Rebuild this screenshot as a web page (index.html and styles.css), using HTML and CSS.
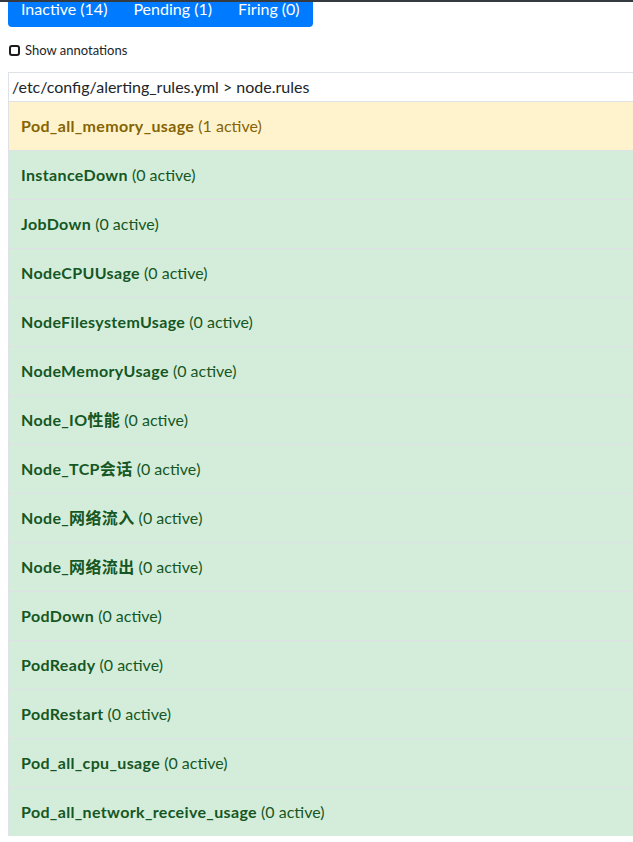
FILE: index.html
```html
<!DOCTYPE html>
<html lang="en">
<head>
    <meta charset="UTF-8">
    <meta name="viewport" content="width=device-width, initial-scale=1.0">
    <title>Alerts</title>
    <link rel="stylesheet" href="styles.css">
</head>
<body>
    <!-- bottom edge of the fixed navbar -->
    <div class="navbar-edge"></div>

    <div class="btn-group">
        <button class="btn">Inactive (14)</button>
        <button class="btn">Pending (1)</button>
        <button class="btn">Firing (0)</button>
    </div>

    <label class="show-annotations">
        <input type="checkbox" class="check">
        <span>Show annotations</span>
    </label>

    <table class="rules">
        <tr class="group-row">
            <td>/etc/config/alerting_rules.yml &gt; node.rules</td>
        </tr>
        <tr class="rule pending"><td><b>Pod_all_memory_usage</b> (1 active)</td></tr>
        <tr class="rule inactive"><td><b>InstanceDown</b> (0 active)</td></tr>
        <tr class="rule inactive"><td><b>JobDown</b> (0 active)</td></tr>
        <tr class="rule inactive"><td><b>NodeCPUUsage</b> (0 active)</td></tr>
        <tr class="rule inactive"><td><b>NodeFilesystemUsage</b> (0 active)</td></tr>
        <tr class="rule inactive"><td><b>NodeMemoryUsage</b> (0 active)</td></tr>
        <tr class="rule inactive"><td><b>Node_IO性能</b> (0 active)</td></tr>
        <tr class="rule inactive"><td><b>Node_TCP会话</b> (0 active)</td></tr>
        <tr class="rule inactive"><td><b>Node_网络流入</b> (0 active)</td></tr>
        <tr class="rule inactive"><td><b>Node_网络流出</b> (0 active)</td></tr>
        <tr class="rule inactive"><td><b>PodDown</b> (0 active)</td></tr>
        <tr class="rule inactive"><td><b>PodReady</b> (0 active)</td></tr>
        <tr class="rule inactive"><td><b>PodRestart</b> (0 active)</td></tr>
        <tr class="rule inactive"><td><b>Pod_all_cpu_usage</b> (0 active)</td></tr>
        <tr class="rule inactive"><td><b>Pod_all_network_receive_usage</b> (0 active)</td></tr>
    </table>
</body>
</html>
```
FILE: styles.css
```css
html {
    overflow: hidden;
}
body {
    font-family: Lato, "Noto Sans CJK SC", sans-serif;
    font-size: 16px;
    line-height: 24px;
    color: #212529;
    background-color: #fff;
    margin: 0 0 0 8px;
    padding-top: 1px;
}
.navbar-edge {
    position: fixed;
    top: 0;
    left: 0;
    right: 0;
    height: 2px;
    background-color: #343a40;
    z-index: 1;
}
.btn-group {
    display: flex;
    width: max-content;
    margin-top: -10px;
    background-color: #007bff;
    border-radius: 4px;
}
.btn {
    font-family: inherit;
    font-size: 16px;
    line-height: 24px;
    padding: 6px 13px;
    border: none;
    background: none;
    color: #fff;
}
.show-annotations {
    display: flex;
    align-items: center;
    gap: 5px;
    margin: 13px 0 0 1px;
    font-size: 13px;
    line-height: 20px;
}
.check {
    appearance: none;
    margin: 0;
    width: 11px;
    height: 11px;
    border: 2px solid #1b1b1b;
    border-radius: 3px;
}
.rules {
    width: 100%;
    margin-top: 12px;
    border-collapse: collapse;
}
.rules td {
    border-top: 1px solid #dee2e6;
    border-left: 1px solid #dee2e6;
    padding: 12px;
}
.rules b {
    letter-spacing: 0.35px;
}
.group-row td {
    padding: 2px 3px;
}
.pending td {
    background-color: #fff3cd;
    color: #856404;
}
.inactive td {
    background-color: #d4edda;
    color: #155724;
}
```
